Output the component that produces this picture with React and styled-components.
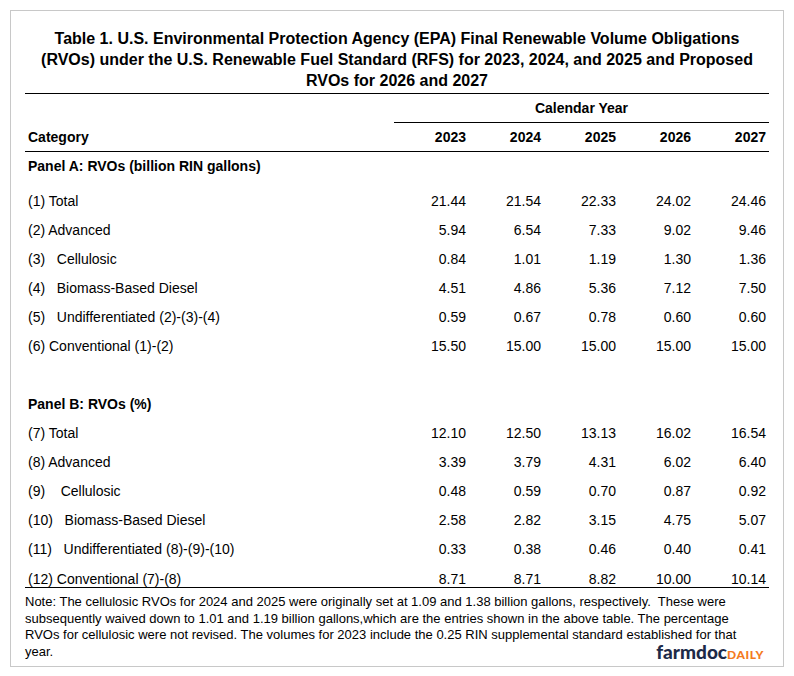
import React from 'react';
import styled, { createGlobalStyle } from 'styled-components';

const GlobalStyle = createGlobalStyle`
  html, body {
    margin: 0;
    background: #fff;
  }
  body {
    font-family: "Liberation Sans", Arial, sans-serif;
    color: #000;
  }
`;

const Page = styled.div`
  padding: 10px;
`;

const Card = styled.div`
  box-sizing: border-box;
  width: 774px;
  border: 1px solid #c8c8c8;
  padding: 16.5px 14px 5px 14px;
  background: #fff;
`;

const Title = styled.h1`
  margin: 0 0 2.5px;
  font-size: 16px;
  line-height: 21px;
  font-weight: 700;
  text-align: center;
`;

const Table = styled.table`
  width: 744px;
  table-layout: fixed;
  border-collapse: collapse;
  border-top: 1px solid #000;
  font-size: 14px;
`;

const Row = styled.tr`
  & > td {
    height: ${p => p.$h || 29}px;
    padding-top: ${p => p.$top || 0}px;
    vertical-align: ${p => (p.$bottom ? 'bottom' : 'middle')};
    border-bottom: ${p => (p.$rule ? '1px solid #000' : 'none')};
  }
`;

const Cell = styled.td`
  box-sizing: border-box;
  padding: 0 3px;
  line-height: 16px;
  text-align: ${p => (p.$num ? 'right' : 'left')};
  font-weight: ${p => (p.$bold ? 700 : 400)};
  white-space: pre;
`;

const SpanHead = styled.td`
  box-sizing: border-box;
  padding: 0;
  text-align: center;
  font-weight: 700;
  && { border-bottom: 1px solid #000; }
`;

const Note = styled.p`
  margin: 6px 0 0;
  font-size: 13px;
  line-height: 16.7px;
  white-space: pre-wrap;
`;

const Logo = styled.span`
  float: right;
  margin-right: 5px;
  font-family: Lato, "Open Sans", sans-serif;
  font-weight: 900;
  font-size: 19px;
  line-height: 16px;
  color: #1d2a48;
  letter-spacing: 0;
`;

const LogoTail = styled.span`
  font-size: 12px;
  color: #f47a20;
  letter-spacing: 0.6px;
`;

const years = ['2023', '2024', '2025', '2026', '2027'];

const panelA = [
  ['(1) Total', ['21.44', '21.54', '22.33', '24.02', '24.46']],
  ['(2) Advanced', ['5.94', '6.54', '7.33', '9.02', '9.46']],
  ['(3)   Cellulosic', ['0.84', '1.01', '1.19', '1.30', '1.36']],
  ['(4)   Biomass-Based Diesel', ['4.51', '4.86', '5.36', '7.12', '7.50']],
  ['(5)   Undifferentiated (2)-(3)-(4)', ['0.59', '0.67', '0.78', '0.60', '0.60']],
  ['(6) Conventional (1)-(2)', ['15.50', '15.00', '15.00', '15.00', '15.00']],
];

const panelB = [
  ['(7) Total', ['12.10', '12.50', '13.13', '16.02', '16.54']],
  ['(8) Advanced', ['3.39', '3.79', '4.31', '6.02', '6.40']],
  ['(9)    Cellulosic', ['0.48', '0.59', '0.70', '0.87', '0.92']],
  ['(10)   Biomass-Based Diesel', ['2.58', '2.82', '3.15', '4.75', '5.07']],
  ['(11)   Undifferentiated (8)-(9)-(10)', ['0.33', '0.38', '0.46', '0.40', '0.41']],
  ['(12) Conventional (7)-(8)', ['8.71', '8.71', '8.82', '10.00', '10.14']],
];

const DataRow = ({ label, values, ...rest }) => (
  <Row {...rest}>
    <Cell>{label}</Cell>
    {values.map((v, i) => (
      <Cell key={i} $num>{v}</Cell>
    ))}
  </Row>
);

export default function App() {
  return (
    <>
      <GlobalStyle />
      <Page>
        <Card>
          <Title>
            Table 1. U.S. Environmental Protection Agency (EPA) Final Renewable Volume Obligations
            <br />
            (RVOs) under the U.S. Renewable Fuel Standard (RFS) for 2023, 2024, and 2025 and Proposed
            <br />
            RVOs for 2026 and 2027
          </Title>
          <Table>
            <colgroup>
              <col style={{ width: 369 }} />
              {years.map(y => (
                <col key={y} style={{ width: 75 }} />
              ))}
            </colgroup>
            <tbody>
              <Row>
                <Cell />
                <SpanHead colSpan={5}>Calendar Year</SpanHead>
              </Row>
              <Row $rule>
                <Cell $bold>Category</Cell>
                {years.map(y => (
                  <Cell key={y} $num $bold>{y}</Cell>
                ))}
              </Row>
              <Row>
                <Cell $bold colSpan={6}>Panel A: RVOs (billion RIN gallons)</Cell>
              </Row>
              {panelA.map(([label, values], i) => (
                <DataRow key={label} label={label} values={values} $h={i === 0 ? 35 : 29} $top={i === 0 ? 6 : 0} />
              ))}
              <Row>
                <Cell colSpan={6} />
              </Row>
              <Row>
                <Cell $bold colSpan={6}>Panel B: RVOs (%)</Cell>
              </Row>
              {panelB.map(([label, values], i) => {
                const last = i === panelB.length - 1;
                return (
                  <DataRow key={label} label={label} values={values} $h={last ? 24 : 29} $bottom={last} $rule={last} />
                );
              })}
            </tbody>
          </Table>
          <Note>
            {'Note: The cellulosic RVOs for 2024 and 2025 were originally set at 1.09 and 1.38 billion gallons, respectively.  These were'}
            <br />
            subsequently waived down to 1.01 and 1.19 billion gallons,which are the entries shown in the above table. The percentage
            <br />
            RVOs for cellulosic were not revised. The volumes for 2023 include the 0.25 RIN supplemental standard established for that
            <br />
            year.
            <Logo>
              farmdoc<LogoTail>DAILY</LogoTail>
            </Logo>
          </Note>
        </Card>
      </Page>
    </>
  );
}
